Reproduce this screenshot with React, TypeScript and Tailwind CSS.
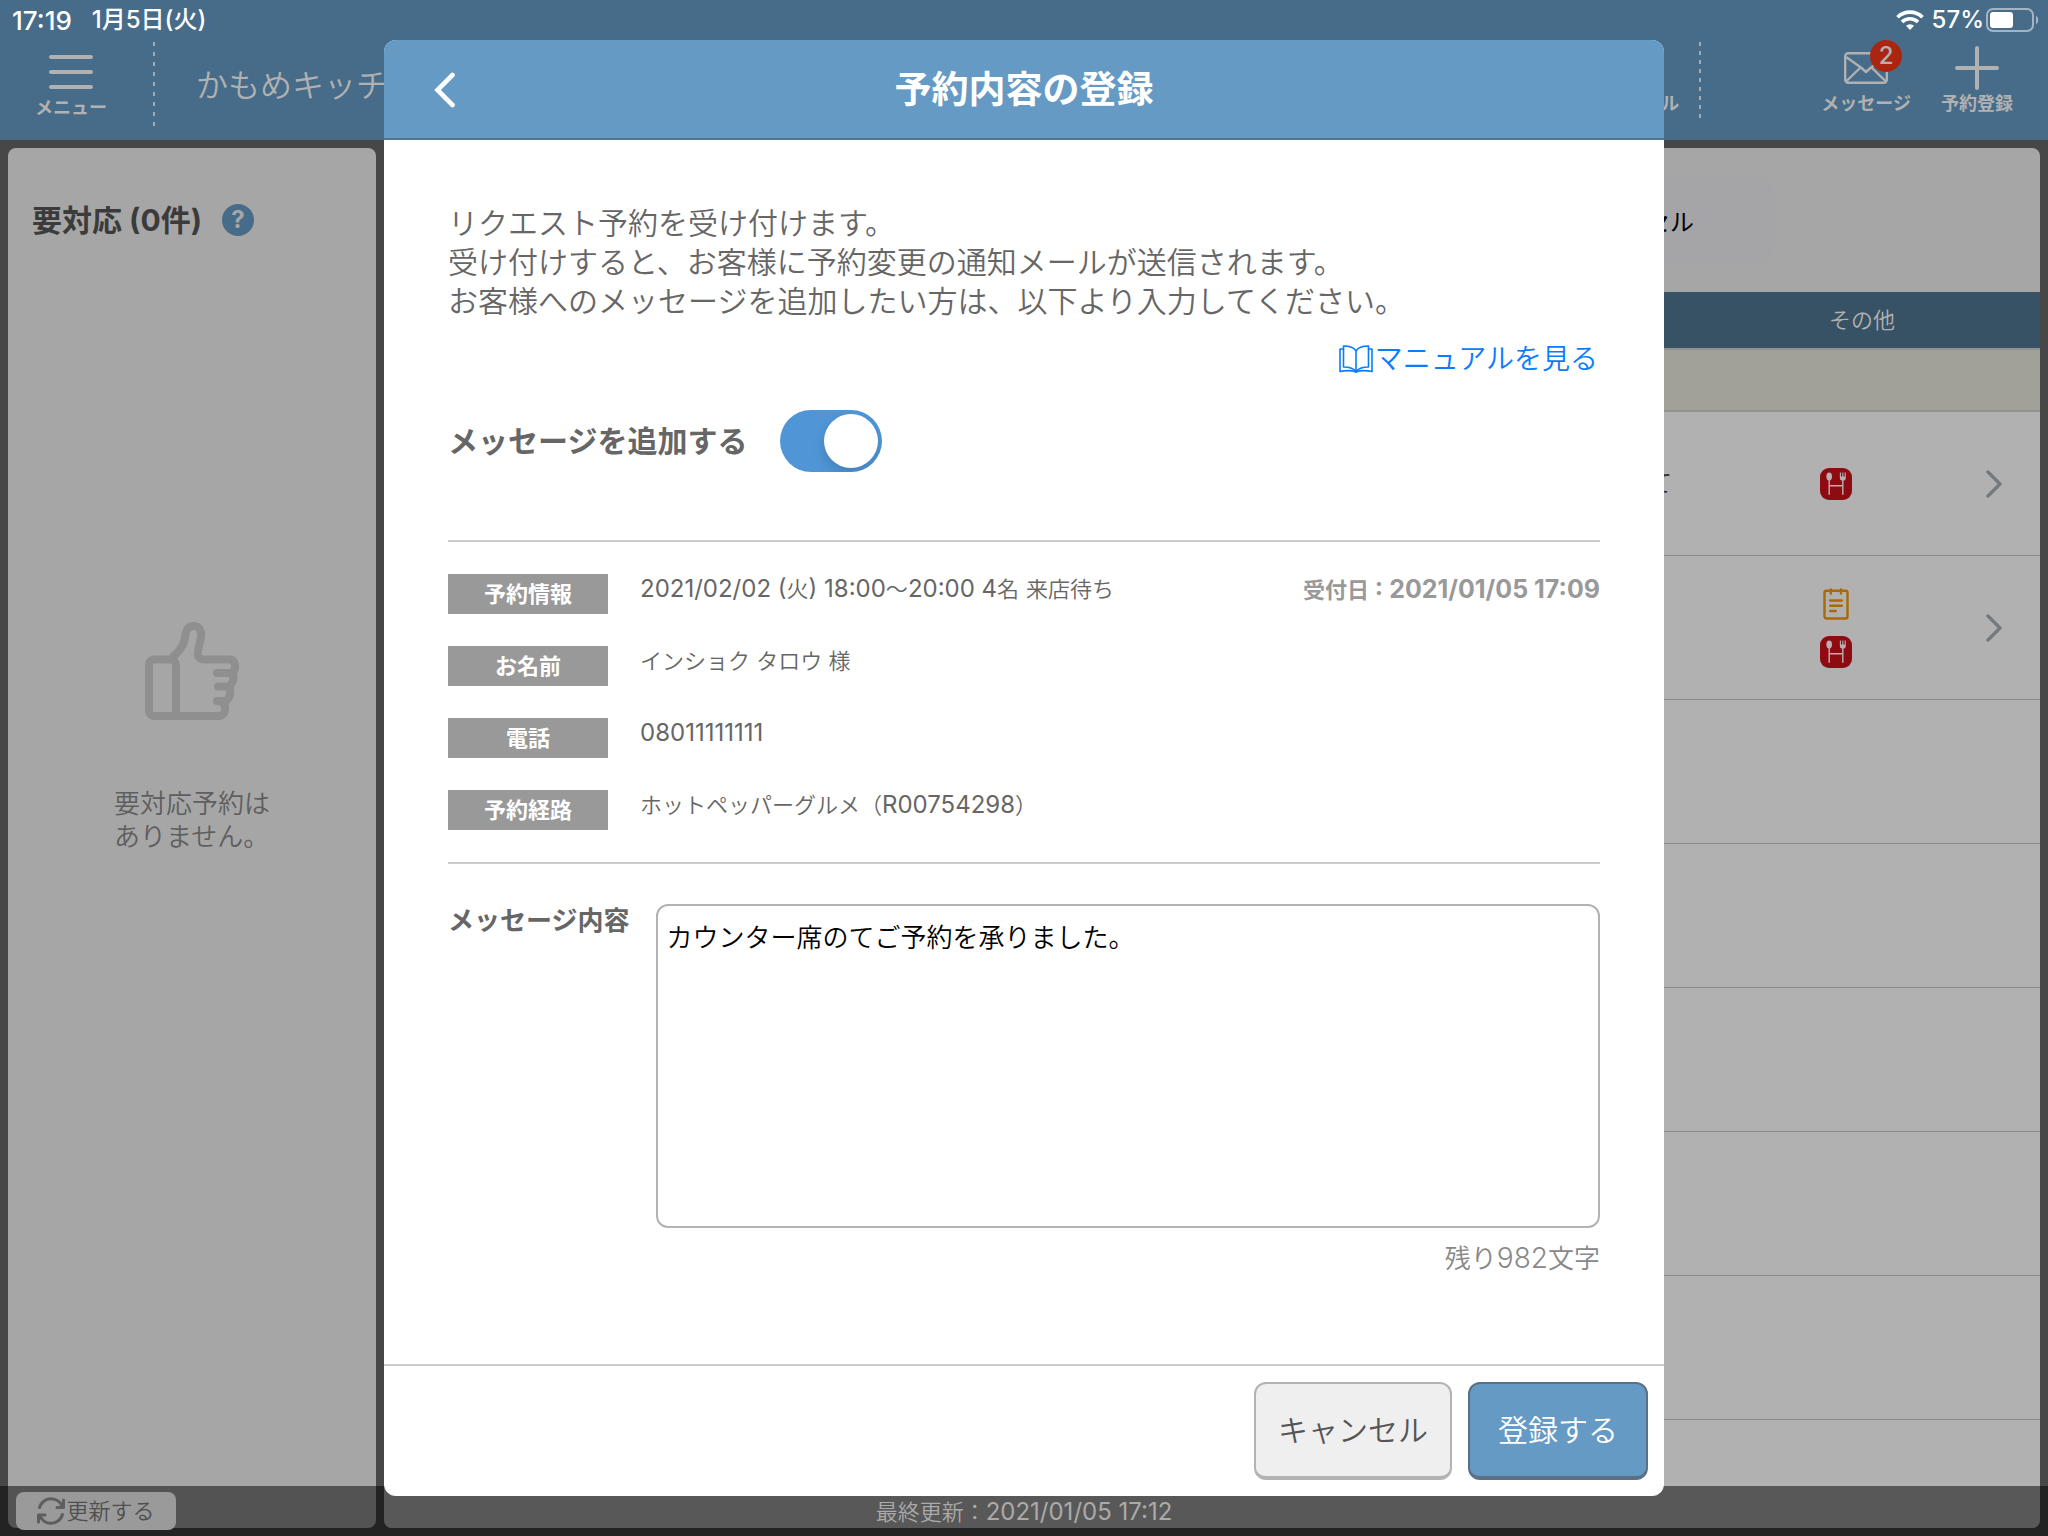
import { useState } from "react";
import type { ReactNode } from "react";

function WifiIcon() {
  return (
    <svg viewBox="0 0 28 20" className="h-5 w-7" fill="none" stroke="#fff" strokeWidth="3.6">
      <path d="M1.5 7.2a18 18 0 0 1 25 0" />
      <path d="M6 12a11.6 11.6 0 0 1 16 0" />
      <path d="M14 20l-4-4.2a5.8 5.8 0 0 1 8 0z" fill="#fff" stroke="none" />
    </svg>
  );
}

function BatteryIcon() {
  return (
    <svg viewBox="0 0 54 26" className="h-[26px] w-[54px]" fill="none">
      <rect x="1" y="2" width="46" height="22" rx="6" stroke="#a3b5c4" strokeWidth="2" />
      <rect x="4" y="5" width="23" height="16" rx="3" fill="#fff" />
      <path d="M50 9v8c3-1 3-7 0-8z" fill="#a3b5c4" />
    </svg>
  );
}

function MenuIcon() {
  return (
    <svg viewBox="0 0 44 36" className="h-9 w-11" stroke="#b1b1b1" strokeWidth="4" strokeLinecap="round">
      <path d="M2 3h40M2 18h40M2 33h40" />
    </svg>
  );
}

function MailIcon() {
  return (
    <svg viewBox="0 0 44 32" className="h-8 w-11" fill="none" stroke="#b1b1b1" strokeWidth="2.4" strokeLinejoin="round">
      <rect x="1.2" y="1.2" width="41.6" height="29.6" rx="3" />
      <path d="M2 5l15 10.500 5 4.500 5-4.500 15-10.500M2 29.500l14.500-14M42 29.500l-14.500-14" />
    </svg>
  );
}

function PlusIcon() {
  return (
    <svg viewBox="0 0 44 44" className="size-11" stroke="#b1b1b1" strokeWidth="4" strokeLinecap="round">
      <path d="M2 22h40M22 2v40" />
    </svg>
  );
}

function ThumbIcon() {
  return (
    <svg viewBox="0 0 94 98" className="h-[98px] w-[94px]" fill="none" stroke="#8f8f8f" strokeWidth="8" strokeLinecap="round" strokeLinejoin="round">
      <path d="M27 37.500H9a5 5 0 0 0-5 5V89a5 5 0 0 0 5 5h65c4 0 6.500-3.500 6-8.500" />
      <path d="M26 37.500c3 0 5 2.500 5 6V93" />
      <path d="M27 36c8-8 11-11 12.500-18 1-6 1.500-14 9-14 6 0 8.500 5 7.500 11l-3 14c-1 5 1 8.500 6 8.500h26c6 0 6.500 10 2.500 13.500H72" />
      <path d="M87 51c3 4 1 10-2.500 13.500H73" />
      <path d="M84.500 65c2 6 0 11-3.500 14H72c4 0 8 2 8 7" />
    </svg>
  );
}

function RefreshIcon() {
  return (
    <svg viewBox="0 0 28 28" className="size-7" fill="none" stroke="#5e5e5e" strokeWidth="3" strokeLinecap="round" strokeLinejoin="round">
      <path d="M2.500 10.500A12 12 0 0 1 25.500 10M26.500 3v7.500H20" />
      <path d="M25.500 17.500A12 12 0 0 1 2.500 18M1.500 25v-7H8" />
    </svg>
  );
}

function GourmetIcon() {
  return (
    <svg viewBox="0 0 32 32" className="size-8" fill="none">
      <rect width="32" height="32" rx="9" fill="#8f0b12" />
      <ellipse cx="9.200" cy="8.500" rx="2.800" ry="4" fill="#b9b1b1" />
      <path d="M9.200 11v15.800M22.800 11v15.800M9.200 17.700h13.600" stroke="#b9b1b1" strokeWidth="1.400" />
      <path d="M20.400 4.500v5.500q0 2 2.400 2t2.400-2V4.500M22.800 4.500V12" stroke="#b9b1b1" strokeWidth="1.100" />
      <path d="M20.400 8.500h4.800v1.500q0 2-2.400 2t-2.400-2z" fill="#b9b1b1" />
    </svg>
  );
}

function NoteIcon() {
  return (
    <svg viewBox="0 0 26 32" className="h-8 w-[26px]" fill="none" stroke="#ab6806" strokeWidth="2.400" strokeLinecap="round">
      <rect x="1.500" y="2.800" width="23" height="27.700" rx="2" />
      <path d="M7.800 1.500V5.500M18 1.500V5.500M7.200 12.500h11.600M7.200 17.800h11.600M7.200 23h5.600" />
    </svg>
  );
}

function RowChevron() {
  return (
    <svg viewBox="0 0 16 28" className="h-7 w-4" fill="none" stroke="#767a7e" strokeWidth="3.400" strokeLinecap="round" strokeLinejoin="round">
      <path d="M2 2l12 12L2 26" />
    </svg>
  );
}

function BackIcon() {
  return (
    <svg viewBox="0 0 22 36" className="h-9 w-[22px]" fill="none" stroke="#fff" strokeWidth="4.600" strokeLinecap="round" strokeLinejoin="miter">
      <path d="M18.500 3L3.500 18l15 15" />
    </svg>
  );
}

function BookIcon() {
  return (
    <svg viewBox="0 0 34 28" className="h-7 w-[34px]" fill="none" stroke="#0a7cff" strokeWidth="1.600" strokeLinejoin="round" strokeLinecap="round">
      <path d="M17 6C15 2.500 9.500 1 4.500 1v21c5 0 10.500 1.500 12.500 5 2-3.500 7.500-5 12.500-5V1C24.500 1 19 2.500 17 6zM17 6v21" />
      <path d="M4.500 4H1v22.500c5-1 12-1 16 .5 4-1.500 11-1.500 16-.5V4h-3.500" />
    </svg>
  );
}

function Num({ children }: { children: ReactNode }) {
  return <span className="text-[24px] font-normal">{children}</span>;
}

type InfoRow = { label: string; value: ReactNode; note?: ReactNode };

const infoRows: InfoRow[] = [
  {
    label: "予約情報",
    value: (
      <>
        <Num>2021/02/02 (</Num>火<Num>) 18:00</Num>〜<Num>20:00 4</Num>名<Num> </Num>来店待ち
      </>
    ),
    note: (
      <>
        受付日<span className="text-[25px]"> : 2021/01/05 17:09</span>
      </>
    ),
  },
  { label: "お名前", value: "インショク タロウ 様" },
  { label: "電話", value: <Num>08011111111</Num> },
  { label: "予約経路", value: <>ホットペッパーグルメ（<Num>R00754298</Num>）</> },
];

type ListRow = { text: string; icons: ReactNode; open: boolean };

const listRows: ListRow[] = [
  { text: "席のみにて", icons: <GourmetIcon />, open: true },
  { text: "", icons: <><NoteIcon /><GourmetIcon /></>, open: true },
  ...Array.from({ length: 6 }, () => ({ text: "", icons: null, open: false })),
];

function HeaderButton({ icon, label, badge }: { icon: ReactNode; label: string; badge?: string }) {
  return (
    <button type="button" className="flex flex-col items-center">
      <span className="relative flex h-11 items-center">
        {icon}
        {badge && (
          <span className="absolute -top-1.5 -right-3.5 flex size-8 items-center justify-center rounded-full bg-[#ab2610] text-[24px] leading-none font-medium">
            {badge}
          </span>
        )}
      </span>
      <span className="text-[18px] leading-7 font-bold">{label}</span>
    </button>
  );
}

function TopBar() {
  return (
    <header className="flex h-[140px] shrink-0 flex-col bg-[#476c89] text-[#b1b1b1]">
      <div className="flex h-10 items-center justify-between pr-2 pl-3 text-[24px] font-medium text-white">
        <div className="flex items-center gap-5">
          <span className="text-[26px]">17:19</span>
          <span>1月5日(火)</span>
        </div>
        <div className="flex items-center gap-2">
          <WifiIcon />
          <div className="flex items-center gap-0.5">
            <span>57%</span>
            <BatteryIcon />
          </div>
        </div>
      </div>
      <div className="flex flex-1 items-start justify-between">
        <div className="flex">
          <div className="flex w-[142px] justify-center pt-2.5">
            <HeaderButton icon={<MenuIcon />} label="メニュー" />
          </div>
          <div className="mt-0.5 ml-[11px] h-[88px] w-0.5 bg-[repeating-linear-gradient(180deg,#a3aab0_0_4px,transparent_4px_10px)]" />
          <p className="ml-[41px] text-[32px] leading-[92px] font-[350]">かもめキッチン</p>
        </div>
        <div className="flex">
          <button type="button" className="mr-5 self-start pt-[50px] text-[18px] leading-7 font-bold">メール</button>
          <div className="mt-0.5 h-[80px] w-0.5 bg-[repeating-linear-gradient(180deg,#a3aab0_0_4px,transparent_4px_9px)]" />
          <div className="flex gap-[30px] pt-1.5 pr-[35px] pl-[120px]">
            <HeaderButton icon={<MailIcon />} label="メッセージ" badge="2" />
            <HeaderButton icon={<PlusIcon />} label="予約登録" />
          </div>
        </div>
      </div>
    </header>
  );
}

function PendingPanel() {
  return (
    <aside className="flex w-[368px] shrink-0 flex-col rounded-lg bg-[#a6a6a6]">
      <div className="flex items-center gap-5 px-6 pt-[50px]">
        <h2 className="text-[30px] leading-[44px] font-bold text-[#3b3b3b]">要対応 (0件)</h2>
        <button type="button" aria-label="ヘルプ" className="flex size-8 items-center justify-center rounded-full bg-[#476c89] text-[24px] leading-none font-bold text-[#a6a6a6]">
          ?
        </button>
      </div>
      <div className="flex flex-col items-center pt-[380px]">
        <ThumbIcon />
        <p className="mt-[67px] text-[26px] leading-[33px] font-[350] text-[#5e5e5e]">
          要対応予約は
          <br />
          ありません。
        </p>
      </div>
    </aside>
  );
}

function ReservationPanel() {
  return (
    <section className="min-w-0 flex-1 overflow-hidden rounded-lg bg-[#a6a6a6]">
      <div className="flex h-36 items-center justify-end pr-[266px]">
        <button type="button" className="h-[90px] rounded-[20px] bg-[#a5a5a8] pt-1.5 pr-[80px] pl-[70px] text-[24px] text-black">キャンセル</button>
      </div>
      <table className="w-full table-fixed border-separate border-spacing-0">
        <colgroup>
          <col />
          <col className="w-[284px]" />
          <col className="w-[72px]" />
        </colgroup>
        <thead>
          <tr className="bg-[#375264] text-[22px] text-[#b1b1b1]">
            <th className="h-14" />
            <th colSpan={2} className="font-[350]">その他</th>
          </tr>
        </thead>
        <tbody>
          <tr className="bg-[#a2a199]">
            <td colSpan={3} className="h-16 border-y-2 border-[#909090]" />
          </tr>
          {listRows.map((row, i) => (
            <tr key={i} className="bg-[#b1b1b1]">
              <td className="h-36 border-b border-[#8a8a8a] pr-3 text-right text-[24px] text-[#333]">{row.text}</td>
              <td className="h-36 border-b border-[#8a8a8a] pl-5">
                <div className="flex flex-col items-center gap-4">{row.icons}</div>
              </td>
              <td className="h-36 border-b border-[#8a8a8a] pl-[18px]">{row.open && <RowChevron />}</td>
            </tr>
          ))}
        </tbody>
      </table>
    </section>
  );
}

function RegisterDialog() {
  const [addMessage, setAddMessage] = useState(true);
  const [message, setMessage] = useState("カウンター席のてご予約を承りました。");
  return (
    <div role="dialog" aria-labelledby="dialog-title" className="flex w-[62.5%] flex-col overflow-hidden rounded-xl bg-white text-[#666]">
      <div className="grid h-[100px] shrink-0 grid-cols-[1fr_auto_1fr] items-center border-b-2 border-[#4f7593] bg-[#659ac5] px-[50px] pt-0.5 text-white">
        <button type="button" aria-label="戻る" className="justify-self-start">
          <BackIcon />
        </button>
        <h1 id="dialog-title" className="text-[37px] leading-[56px] font-bold">予約内容の登録</h1>
      </div>

      <div className="flex-1 px-16 pt-16">
        <p className="text-[30px] leading-[39px] font-[350]">
          リクエスト予約を受け付けます。
          <br />
          受け付けすると、お客様に予約変更の通知メールが送信されます。
          <br />
          お客様へのメッセージを追加したい方は、以下より入力してください。
        </p>
        <div className="mt-[18px] flex justify-end pr-0.5">
          <a href="#manual" className="flex items-center gap-0.5 text-[28px] leading-10 font-[350] text-[#0a7cff]">
            <BookIcon />
            マニュアルを見る
          </a>
        </div>

        <label className="mt-[31px] flex h-[62px] items-center gap-[33px] text-[30px] font-bold">
          メッセージを追加する
          <input type="checkbox" role="switch" checked={addMessage} onChange={(e) => setAddMessage(e.target.checked)} className="peer sr-only" />
          <span className="flex h-[62px] w-[102px] items-center overflow-hidden rounded-full bg-[#ccc] p-1 peer-checked:justify-end peer-checked:bg-[#5096d7]">
            <span className="size-[54px] rounded-full bg-white shadow-[0_6px_14px_rgba(0,0,0,0.15)]" />
          </span>
        </label>

        <dl className="mt-[68px] flex flex-col gap-8 border-y-2 border-[#ccc] py-8 text-[22px]">
          {infoRows.map((row) => (
            <div key={row.label} className="flex h-10 gap-8">
              <dt className="h-10 w-40 bg-[#999] text-center leading-[40px] font-bold text-white">{row.label}</dt>
              <dd className="flex flex-1 justify-between leading-[30px] font-[350]">
                <span>{row.value}</span>
                {row.note && <strong className="font-bold text-[#999]">{row.note}</strong>}
              </dd>
            </div>
          ))}
        </dl>

        <div className="mt-10 flex gap-[27px]">
          <label htmlFor="message" className="text-[26px] leading-[34px] font-bold">メッセージ内容</label>
          <textarea
            id="message"
            value={message}
            onChange={(e) => setMessage(e.target.value)}
            className="h-[324px] flex-1 resize-none rounded-xl border-2 border-[#b3b3b3] px-2 py-3 text-[26px] leading-10 font-[350] text-black outline-none"
          />
        </div>
        <p className="mt-2.5 text-right text-[26px] leading-10 font-[350] text-[#888]">
          残り<span className="text-[28px]">{1000 - message.length}</span>文字
        </p>
      </div>

      <div className="flex h-[132px] shrink-0 items-start justify-end gap-4 border-t-2 border-[#ccc] px-4 pt-4 text-[30px] font-[350]">
        <button type="button" className="h-[98px] w-[198px] rounded-xl border-2 border-b-4 border-[#b3b3b3] bg-[#efefef] text-[#555]">キャンセル</button>
        <button type="button" className="h-[98px] w-[180px] rounded-xl border-2 border-b-4 border-[#5a7084] bg-[#659ac5] text-white">登録する</button>
      </div>
    </div>
  );
}

export default function App() {
  return (
    <div className="relative flex h-screen flex-col overflow-hidden bg-[#474747] font-['Inter','Noto_Sans_CJK_JP',sans-serif]" lang="ja">
      <TopBar />
      <main className="flex min-h-0 flex-1 gap-2 p-2">
        <PendingPanel />
        <ReservationPanel />
      </main>
      <footer className="absolute inset-x-0 bottom-0 grid h-[50px] grid-cols-[1fr_auto_1fr] items-center bg-black/50 px-4 text-[22px] font-[350]">
        <button type="button" className="flex h-[38px] w-40 items-center justify-center gap-px rounded-lg bg-[#9a9a9a] text-[#4f4f4f]">
          <RefreshIcon />
          更新する
        </button>
        <p className="pt-0.5 text-[#aaa]">最終更新：<Num>2021/01/05 17:12</Num></p>
      </footer>
      <div className="absolute inset-0 flex justify-center py-10">
        <RegisterDialog />
      </div>
    </div>
  );
}
